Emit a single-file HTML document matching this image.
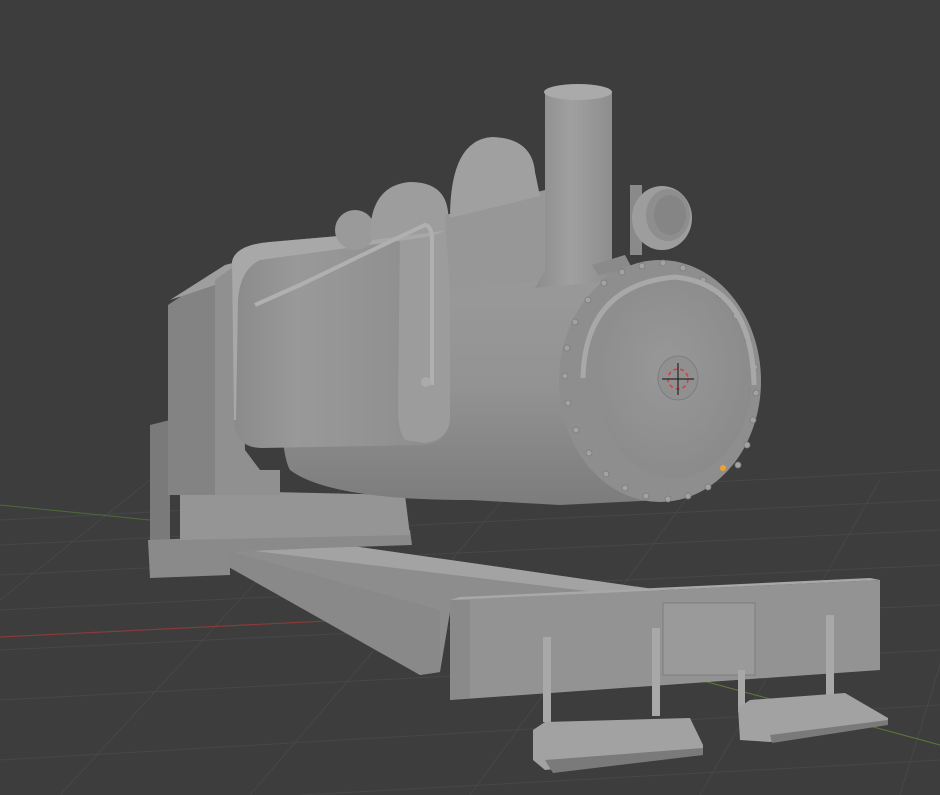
<!DOCTYPE html>
<html><head><meta charset="utf-8"><style>
html,body{margin:0;padding:0;background:#3d3d3d;width:940px;height:795px;overflow:hidden}
svg{display:block}
</style></head><body>
<svg width="940" height="795" viewBox="0 0 940 795" xmlns="http://www.w3.org/2000/svg">
<defs>
<linearGradient id="boiler" x1="0" y1="0" x2="0" y2="1">
<stop offset="0" stop-color="#9a9a9a"/><stop offset="0.5" stop-color="#939393"/><stop offset="1" stop-color="#7c7c7c"/></linearGradient>
<linearGradient id="tank" x1="0" y1="0" x2="1" y2="0">
<stop offset="0" stop-color="#8a8a8a"/><stop offset="0.3" stop-color="#999"/><stop offset="1" stop-color="#8c8c8c"/></linearGradient>
<linearGradient id="stack" x1="0" y1="0" x2="1" y2="0">
<stop offset="0" stop-color="#8c8c8c"/><stop offset="0.4" stop-color="#a0a0a0"/><stop offset="1" stop-color="#888"/></linearGradient>
<radialGradient id="door" cx="0.45" cy="0.45" r="0.6">
<stop offset="0" stop-color="#989898"/><stop offset="1" stop-color="#8a8a8a"/></radialGradient>
</defs>
<rect width="940" height="795" fill="#3d3d3d"/>
<g stroke="#474747" stroke-width="1" fill="none">
<path d="M0 520 L940 470"/><path d="M0 545 L940 500"/><path d="M0 575 L940 530"/><path d="M0 610 L940 565"/>
<path d="M0 650 L940 605"/><path d="M0 700 L940 650"/><path d="M0 760 L940 705"/><path d="M300 795 L940 760"/>
<path d="M0 600 L150 480"/><path d="M60 795 L350 480"/><path d="M250 795 L520 480"/><path d="M470 795 L700 480"/>
<path d="M700 795 L880 480"/><path d="M900 795 L960 600"/>
</g>
<path d="M0 637 L450 615" stroke="#8a3a3a" stroke-width="1.2"/>
<path d="M0 505 L150 520" stroke="#4c6a3a" stroke-width="1"/>
<path d="M700 680 L940 745" stroke="#5a7a3a" stroke-width="1"/>
<polygon points="225,545 310,540 660,590 660,610 450,612 440,672 420,675 225,560" fill="#8d8d8d"/>
<polygon points="225,545 310,540 660,590 620,595 230,548" fill="#a3a3a3"/>
<polygon points="225,550 440,610 440,672 420,675 225,565" fill="#898989"/>
<polygon points="150,425 170,420 170,540 150,540" fill="#7a7a7a"/>
<polygon points="148,540 410,530 412,545 320,548 230,552 230,575 150,578" fill="#8a8a8a"/>
<polygon points="180,490 405,495 410,535 180,540" fill="#959595"/>
<polygon points="168,305 220,270 232,270 232,495 168,495" fill="#838383"/>
<polygon points="170,300 225,265 300,245 330,240 300,260 230,280" fill="#9e9e9e"/>
<polygon points="215,280 240,262 245,450 260,470 280,470 280,495 215,495" fill="#909090"/>
<path d="M280 330 Q300 300 440 290 L600 275 L660 262 L660 500 L560 505 L470 500 Q330 500 290 470 Q278 450 280 330 Z" fill="url(#boiler)"/>
<path d="M232 262 Q235 245 270 242 L430 228 Q448 228 450 250 L450 420 Q448 445 420 445 L262 448 Q235 448 234 420 Z" fill="url(#tank)"/>
<path d="M400 232 L445 228 Q450 235 450 250 L450 420 Q448 440 425 443 L405 440 Q398 430 398 410 Z" fill="#9c9c9c"/>
<path d="M232 262 Q235 245 270 242 L430 228 L445 230 Q440 235 420 238 L260 260 Q240 270 238 300 L236 420 L234 420 Z" fill="#a8a8a8"/>
<ellipse cx="355" cy="230" rx="20" ry="20" fill="#9a9a9a"/>
<path d="M370 232 Q372 185 410 182 Q445 182 448 212 L450 230 L372 240 Z" fill="#9d9d9d"/>
<path d="M445 215 L545 190 L550 280 L450 290 Z" fill="#979797"/>
<path d="M450 218 Q450 140 492 137 Q532 138 535 172 L540 196 Z" fill="#a0a0a0"/>
<path d="M255 305 L300 285 L410 232 L425 225 Q432 226 432 240 L432 385" stroke="#b0b0b0" stroke-width="4" fill="none"/>
<circle cx="426" cy="382" r="5" fill="#aaa"/>
<path d="M545 92 L545 270 L535 288 L625 280 L612 260 L612 92 Z" fill="url(#stack)"/>
<ellipse cx="578" cy="92" rx="34" ry="8" fill="#aaa"/>
<rect x="630" y="185" width="12" height="70" fill="#8a8a8a"/>
<ellipse cx="662" cy="218" rx="30" ry="32" fill="#9d9d9d"/>
<ellipse cx="668" cy="215" rx="22" ry="26" fill="#8e8e8e"/>
<ellipse cx="670" cy="215" rx="16" ry="20" fill="#858585"/>
<polygon points="592,265 625,255 632,268 598,275" fill="#8a8a8a"/>
<ellipse cx="660" cy="381" rx="101" ry="121" fill="#8e8e8e"/>
<ellipse cx="674" cy="378" rx="78" ry="100" fill="url(#door)"/>
<g fill="#a2a2a2" stroke="#7a7a7a" stroke-width="0.8">
<circle cx="642" cy="266" r="3"/><circle cx="663" cy="263" r="3"/><circle cx="683" cy="268" r="3"/><circle cx="703" cy="280" r="3"/>
<circle cx="720" cy="295" r="3"/><circle cx="736" cy="316" r="3"/><circle cx="748" cy="340" r="3"/><circle cx="755" cy="367" r="3"/>
<circle cx="756" cy="393" r="3"/><circle cx="753" cy="420" r="3"/><circle cx="747" cy="445" r="3"/><circle cx="738" cy="465" r="3"/>
<circle cx="708" cy="487" r="3"/><circle cx="688" cy="496" r="3"/><circle cx="668" cy="499" r="3"/><circle cx="646" cy="496" r="3"/>
<circle cx="625" cy="488" r="3"/><circle cx="606" cy="474" r="3"/><circle cx="589" cy="453" r="3"/><circle cx="576" cy="430" r="3"/>
<circle cx="568" cy="403" r="3"/><circle cx="565" cy="376" r="3"/><circle cx="567" cy="348" r="3"/><circle cx="575" cy="322" r="3"/>
<circle cx="588" cy="300" r="3"/><circle cx="604" cy="283" r="3"/><circle cx="622" cy="272" r="3"/>
</g>
<path d="M583 378 Q585 285 675 277 Q752 285 754 385" stroke="#a8a8a8" stroke-width="5" fill="none"/>
<ellipse cx="678" cy="378" rx="20" ry="22" fill="#909090" stroke="#7d7d7d"/>
<circle cx="678" cy="379" r="10" fill="none" stroke="#d04040" stroke-width="1.5" stroke-dasharray="4 3"/>
<path d="M678 363 V395 M662 379 H694" stroke="#111" stroke-width="1"/>
<circle cx="723" cy="468" r="3" fill="#f0a030"/>
<polygon points="450,600 880,580 880,670 450,700" fill="#939393"/>
<polygon points="450,600 880,580 870,578 460,597" fill="#a8a8a8"/>
<polygon points="450,600 470,600 470,698 450,700" fill="#8a8a8a"/>
<rect x="663" y="603" width="92" height="72" fill="#9a9a9a" stroke="#7e7e7e"/>
<g fill="#a8a8a8">
<rect x="543" y="637" width="8" height="85"/><rect x="652" y="628" width="8" height="88"/>
<rect x="738" y="670" width="7" height="42"/><rect x="826" y="615" width="8" height="80"/>
</g>
<polygon points="533,730 545,722 690,718 703,745 703,755 545,770 533,760" fill="#a2a2a2"/>
<polygon points="545,760 703,748 703,755 553,773" fill="#7a7a7a"/>
<polygon points="738,708 750,700 845,693 888,718 888,723 770,742 740,740" fill="#a2a2a2"/>
<polygon points="770,735 888,720 888,725 772,743" fill="#7a7a7a"/>
</svg>
</body></html>
